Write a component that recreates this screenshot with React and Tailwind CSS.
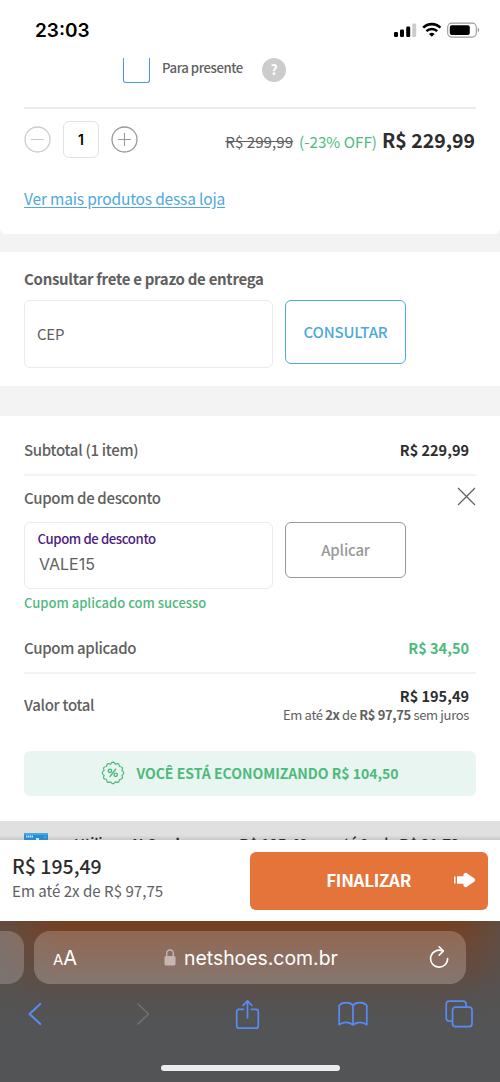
import React from "react";

const StatusBar = () => (
  <div className="flex h-[58px] items-center justify-between pl-[35px] pr-[20px] pt-[3px]">
    <span className="font-['Inter',sans-serif] text-[19px] font-semibold leading-6 text-black">23:03</span>
    <svg width="87" height="18" viewBox="0 0 87 18" fill="none">
      {/* signal */}
      <rect x="1" y="10" width="4" height="5" rx="1.2" fill="#000" />
      <rect x="7" y="7.5" width="4" height="7.5" rx="1.2" fill="#000" />
      <rect x="13.2" y="4.5" width="4" height="10.5" rx="1.2" fill="#000" />
      <rect x="19.2" y="1.5" width="4" height="13.5" rx="1.2" fill="#ccc" />
      {/* wifi */}
      <path d="M30.2 5.6C35 .9 42.6 .9 47.4 5.6" stroke="#000" strokeWidth="2.6" />
      <path d="M33.4 9.1C36.4 6.2 41.2 6.2 44.2 9.1" stroke="#000" strokeWidth="2.4" />
      <path d="M36 11.9C37.6 10.5 40 10.5 41.6 11.9L38.8 14.8Z" fill="#000" />
      {/* battery */}
      <rect x="54.7" y="1.1" width="28.6" height="14" rx="4" stroke="#9a9a9a" strokeWidth="1.1" />
      <rect x="56.8" y="3.2" width="20" height="9.8" rx="2" fill="#000" />
      <path d="M84.8 5.8C86.4 6.4 86.4 9.6 84.8 10.2Z" fill="#888" />
    </svg>
  </div>
);

const ProductCard = () => (
  <div className="h-[176px] rounded-b-md bg-white px-6">
    <div className="flex h-[49px] items-start pl-[99px]">
      <div className="h-[25px] w-[27px] rounded-b-[3px] border border-t-0 border-[#4a94f5]" />
      <span className="ml-3 w-[100px] whitespace-nowrap text-[13.2px] font-medium leading-[20px] tracking-[-0.45px] text-[#606060]">Para presente</span>
      <span className="flex h-6 w-6 justify-center rounded-full bg-[#ccc] text-[14px] font-bold leading-[22px] text-white">?</span>
    </div>
    <div className="h-[2px] bg-[#ebebeb]" />
    <div className="flex h-[61px] items-center">
      <svg width="27" height="27" viewBox="0 0 27 27" fill="none" stroke="#ccc">
        <circle cx="13.5" cy="13.5" r="12.5" strokeWidth="1.3" />
        <path d="M7 13.5H20" strokeWidth="1.1" />
      </svg>
      <div className="ml-3 flex h-[37px] w-9 items-center justify-center rounded-md border border-[#e2e2e2] font-['Inter',sans-serif] text-sm font-semibold text-black">
        1
      </div>
      <svg className="ml-3" width="27" height="27" viewBox="0 0 27 27" fill="none" stroke="#999">
        <circle cx="13.5" cy="13.5" r="12.5" strokeWidth="1.3" />
        <path d="M7 13.5H20M13.5 7V20" strokeWidth="1.1" />
      </svg>
      <div className="ml-auto flex items-baseline whitespace-nowrap pr-px pt-px leading-6">
        <span className="text-[15.2px] text-[#606060] line-through">R$ 299,99</span>
        <span className="ml-1.5 text-[15.2px] text-[#4dba7c]">(-23% OFF)</span>
        <span className="ml-[5px] text-[19.5px] font-bold text-[#2d2d2d]">R$ 229,99</span>
      </div>
    </div>
    <div className="mt-4">
      <a className="whitespace-nowrap text-[15.5px] leading-6 tracking-[-0.18px] text-[#4fa8dc] underline underline-offset-2">Ver mais produtos dessa loja</a>
    </div>
  </div>
);

const Shipping = () => (
  <div className="h-[134px] bg-white px-6 pt-[15px]">
    <h2 className="text-[15px] font-bold leading-6 tracking-[-0.3px] text-[#606060]">Consultar frete e prazo de entrega</h2>
    <div className="mt-[9px] flex items-start">
      <div className="flex h-[68px] w-[249px] items-center rounded-md border border-[#ebebeb] px-3 text-[15px] tracking-[-0.2px] text-[#606060]">CEP</div>
      <button className="ml-3 h-16 w-[121px] rounded-md border border-[#4fa8dc] pb-px text-[15px] font-medium leading-6 tracking-[-0.2px] text-[#4fa8dc]">CONSULTAR</button>
    </div>
  </div>
);

const SavingsIcon = () => (
  <svg className="-mt-px" width="24" height="24" viewBox="0 0 24 24" fill="none" stroke="#4dba7c">
    <path
      d="M12 1.2Q13.2 1.3 14.4 3.1Q16.4 2.3 17.4 2.7Q18.2 3.4 18.5 5.5Q20.6 5.8 21.3 6.6Q21.7 7.6 20.9 9.6Q22.7 10.8 22.8 12Q22.7 13.2 20.9 14.4Q21.7 16.4 21.3 17.4Q20.6 18.2 18.5 18.5Q18.2 20.6 17.4 21.3Q16.4 21.7 14.4 20.9Q13.2 22.7 12 22.8Q10.8 22.7 9.6 20.9Q7.6 21.7 6.6 21.3Q5.8 20.6 5.5 18.5Q3.4 18.2 2.7 17.4Q2.3 16.4 3.1 14.4Q1.3 13.2 1.2 12Q1.3 10.8 3.1 9.6Q2.3 7.6 2.7 6.6Q3.4 5.8 5.5 5.5Q5.8 3.4 6.6 2.7Q7.6 2.3 9.6 3.1Q10.8 1.3 12 1.2Z"
      strokeWidth="1.2"
      strokeLinejoin="round"
    />
    <circle cx="8.9" cy="9.8" r="1.7" strokeWidth="1.4" />
    <circle cx="14.7" cy="13.8" r="1.7" strokeWidth="1.4" />
    <path d="M15 7.8L8.7 15.9" strokeWidth="1.4" />
  </svg>
);

const Summary = () => (
  <div className="h-[405px] bg-white px-6">
    <div className="flex h-[60px] items-center justify-between border-b-2 border-[#f3f3f3] pr-[7px] pt-[10px]">
      <span className="text-[15px] font-medium leading-6 tracking-[-0.3px] text-[#606060]">Subtotal (1 item)</span>
      <span className="text-[14.5px] font-bold leading-6 text-[#2d2d2d]">R$ 229,99</span>
    </div>
    <div className="flex h-[46px] items-center justify-between">
      <span className="-mt-[2px] text-[15px] font-medium leading-6 tracking-[-0.33px] text-[#606060]">Cupom de desconto</span>
      <svg className="-mt-[5px]" width="19" height="19" viewBox="0 0 19 19" stroke="#606060" strokeWidth="1.2">
        <path d="M1 1L18 18M18 1L1 18" />
      </svg>
    </div>
    <div className="flex items-start">
      <div className="h-[67px] w-[249px] rounded-md border border-[#ebebeb] px-3 pt-[6px]">
        <p className="pl-[0.5px] text-[13.2px] font-medium leading-5 tracking-[-0.41px] text-[#4b2082]">Cupom de desconto</p>
        <p className="pl-[2px] pt-[3px] font-['Inter',sans-serif] text-[16px] leading-6 text-[#606060]">VALE15</p>
      </div>
      <button className="ml-3 h-14 w-[121px] rounded-md border border-[#999] text-[15px] font-medium tracking-[-0.2px] text-[#999]">Aplicar</button>
    </div>
    <p className="mt-1 text-[13px] font-medium leading-5 text-[#4dba7c]">Cupom aplicado com sucesso</p>
    <div className="flex h-[61px] items-center justify-between border-b-2 border-[#f3f3f3] pr-[7px] pt-[11px]">
      <span className="text-[15px] font-medium leading-6 tracking-[-0.33px] text-[#606060]">Cupom aplicado</span>
      <span className="text-[14.5px] font-bold leading-6 text-[#4dba7c]">R$ 34,50</span>
    </div>
    <div className="flex h-[77px] items-start justify-between pr-[7px] pt-3">
      <span className="pt-[7px] text-[15px] font-medium leading-6 tracking-[-0.3px] text-[#606060]">Valor total</span>
      <div className="flex flex-col items-end whitespace-nowrap text-[#606060]">
        <span className="text-[14.5px] font-bold leading-5 text-[#2d2d2d]">R$ 195,49</span>
        <span className="text-[13px] leading-[18px] tracking-[-0.34px]">
          Em até <b>2x</b> de <b>R$ 97,75</b> sem juros
        </span>
      </div>
    </div>
    <div className="flex h-[45px] items-center justify-center rounded-md bg-[#e8f5f0]">
      <SavingsIcon />
      <span className="-mt-[2px] ml-[11px] whitespace-nowrap text-[14px] font-bold leading-5 text-[#4dba7c]">VOCÊ ESTÁ ECONOMIZANDO R$ 104,50</span>
    </div>
  </div>
);

// only the top of this row shows above the sticky checkout bar
const CardOffer = () => (
  <div className="flex h-[19px] items-start overflow-hidden bg-[linear-gradient(#e0e0e0_75%,#c8c8c8)] px-6">
    <svg className="mt-3 shrink-0" width="24" height="16" viewBox="0 0 24 16">
      <rect width="24" height="16" fill="#2a8cd0" />
      <rect width="24" height="2" fill="#45a6e0" />
      <path d="M2 3.5H9" stroke="#b8e2f7" strokeWidth="2" strokeDasharray="1.5 .5" />
      <path d="M20.5 4H22" stroke="#8fd0f0" />
      <path d="M12 5H15V8H12Z" fill="#c5e6f7" />
    </svg>
    <span className="ml-[26px] mt-[11px] whitespace-nowrap text-[15px] font-medium leading-6 tracking-[-0.35px] text-[#2d2d2d]">
      Utilize o <b>N Card</b> e pague <b>R$ 195,49</b> em até 9x de <b>R$ 21,72</b>
    </span>
  </div>
);

const CheckoutBar = () => (
  <div className="flex h-[81px] items-start justify-between bg-white pl-3 pr-3 pt-3">
    <div className="whitespace-nowrap pt-[2px]">
      <p className="text-[19.5px] font-medium leading-6 text-[#2d2d2d]">R$ 195,49</p>
      <p className="text-[15.1px] leading-6 text-[#606060]">Em até 2x de R$ 97,75</p>
    </div>
    <button className="flex h-[58px] w-[238px] items-center justify-end rounded-md bg-[#e5743a] pr-3 text-[17px] font-bold leading-6 text-white">
      <span className="-mt-[3px] tracking-[-0.3px]">FINALIZAR</span>
      <svg className="-mt-[2px] ml-[43px]" width="22" height="16" viewBox="0 0 22 16" fill="#fff">
        <path d="M0 4.5H1.5V11.5H0ZM3 5Q3 4.3 3.7 4.3H9.5V2.5Q10.5 0 12.5 1L20.5 6.6Q22 8 20.5 9.4L12.5 15Q10.5 16 9.5 13.5V11.7H3.7Q3 11.7 3 11Z" />
      </svg>
    </button>
  </div>
);

const BrowserBar = () => (
  <div className="h-[161px] bg-[linear-gradient(90deg,#53545599_0%,transparent_12%,transparent_91%,#53545599_100%),linear-gradient(#74401f_0%,#73442c_12%,#654a3d_32%,#5a4f4a_42%,#535455_60%)] pt-[10px] font-['Inter',sans-serif]">
    <div className="flex h-[53px]">
      <div className="w-6 rounded-r-2xl bg-white/20" />
      <div className="ml-[10px] flex w-[432px] items-center rounded-2xl bg-[linear-gradient(#ffffff33,#ffffff3b)] pl-[19px] pr-[17px] text-white">
        <span className="w-[111px]">
          <span className="text-[15px]">A</span>
          <span className="text-[20px]">A</span>
        </span>
        <svg width="12" height="17" viewBox="0 0 12 17" fill="none">
          <rect x=".5" y="7" width="11" height="9.5" rx="1.5" fill="#c6b5b0" />
          <path d="M2.7 7.5V4.5a3.3 3.5 0 0 1 6.6 0V7.5" stroke="#c6b5b0" strokeWidth="1.4" />
        </svg>
        <span className="ml-2 pt-[2px] text-[19.4px]">netshoes.com.br</span>
        <svg className="-mt-[2px] ml-auto" width="20" height="24" viewBox="0 0 20 24" fill="none" stroke="#fff" strokeWidth="1.6" strokeLinecap="round" strokeLinejoin="round">
          <path d="M18.6 13.5A8.5 8.5 0 1 1 13.6 5.9" />
          <path d="M10.2 1.9L14.4 6L10.2 10.1" />
        </svg>
      </div>
    </div>
    <div className="mt-3 flex h-9 items-center pl-7 pr-[26px]">
      <svg width="14" height="24" viewBox="0 0 14 24" fill="none" stroke="#578cf5" strokeWidth="2" strokeLinecap="round" strokeLinejoin="round">
        <path d="M12.3 2L1.5 12L12.3 22" />
      </svg>
      <svg className="ml-[94px]" width="14" height="24" viewBox="0 0 14 24" fill="none" stroke="#6f7071" strokeWidth="1.7" strokeLinecap="round" strokeLinejoin="round">
        <path d="M2 2L12.5 12L2 22" />
      </svg>
      <svg className="ml-[85px]" width="25" height="31" viewBox="0 0 25 31" fill="none" stroke="#578cf5" strokeWidth="1.7" strokeLinecap="round" strokeLinejoin="round">
        <path d="M8.5 10.3H4Q1.7 10.3 1.7 12.8V26.7Q1.7 29.2 4 29.2H21Q23.3 29.2 23.3 26.7V12.8Q23.3 10.3 21 10.3H16.5" />
        <path d="M12.5 19V2M8 6.5L12.5 1.8L17 6.5" />
      </svg>
      <svg className="ml-[78px]" width="30" height="26" viewBox="0 0 30 26" fill="none" stroke="#578cf5" strokeWidth="1.7" strokeLinejoin="round">
        <path d="M15 4.5C12.5 1 4.5 .5 1.2 4.5V23.7C5 20.5 11.5 20.5 15 24C18.5 20.5 25 20.5 28.8 23.7V4.5C25.5 .5 17.5 1 15 4.5V24" />
      </svg>
      <svg className="ml-auto" width="29" height="28" viewBox="0 0 29 28" fill="none" stroke="#578cf5" strokeWidth="1.7">
        <path d="M7.5 21H4.5Q1.2 21 1.2 18V4.2Q1.2 1.2 4.2 1.2H18Q21 1.2 21.2 4.5V7" />
        <rect x="7.5" y="7.2" width="19.5" height="19.5" rx="3" />
      </svg>
    </div>
    <div className="mx-auto mt-[33px] h-[6px] w-[179px] rounded-full bg-[#ececec]" />
  </div>
);

const App = () => {
  return (
    <div className="flex h-[1082px] w-[500px] flex-col overflow-hidden bg-[#f3f3f3] font-['Noto_Sans_CJK_SC',sans-serif]">
      <div className="bg-white">
        <StatusBar />
      </div>
      <ProductCard />
      <div className="h-[18px]" />
      <Shipping />
      <div className="h-[30px]" />
      <Summary />
      <CardOffer />
      <CheckoutBar />
      <BrowserBar />
    </div>
  );
};

export default App;
